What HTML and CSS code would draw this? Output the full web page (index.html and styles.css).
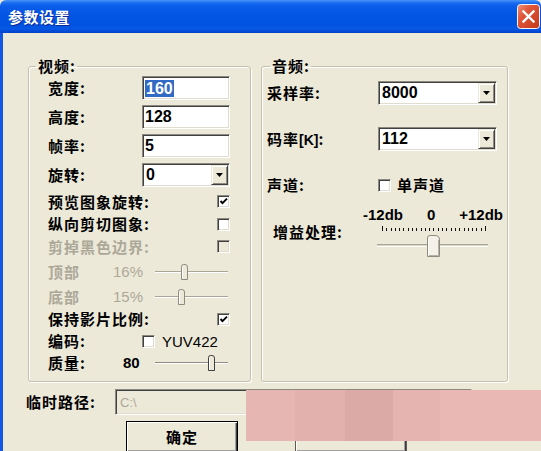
FILE: index.html
```html
<!DOCTYPE html>
<html lang="zh-CN">
<head>
<meta charset="utf-8">
<title>参数设置</title>
<link rel="stylesheet" href="styles.css">
</head>
<body>
<div class="window">
  <div class="titlebar">
    <span class="title">参数设置</span>
    <span class="close">
      <svg width="23" height="25" viewBox="0 0 23 25">
        <defs>
          <linearGradient id="cg" x1="0" y1="0" x2="1" y2="1">
            <stop offset="0" stop-color="#F2937B"/>
            <stop offset="0.35" stop-color="#E1563A"/>
            <stop offset="1" stop-color="#C23818"/>
          </linearGradient>
        </defs>
        <rect x="0.5" y="0.5" width="22" height="24" rx="3" fill="url(#cg)" stroke="#F4F4F4"/>
        <path d="M6.5 7.5l10 10M16.5 7.5l-10 10" stroke="#fff" stroke-width="2.4" stroke-linecap="square"/>
      </svg>
    </span>
  </div>
  <div class="client">
    <div class="groups">
      <fieldset class="group video">
        <legend>视频:</legend>
        <div class="row h28"><span class="lbl wv">宽度:</span><span class="edit"><span class="hl">160</span></span></div>
        <div class="row h29"><span class="lbl wv">高度:</span><span class="edit">128</span></div>
        <div class="row h29"><span class="lbl wv">帧率:</span><span class="edit">5</span></div>
        <div class="row h30"><span class="lbl wv">旋转:</span>
          <span class="combo v-combo"><span class="val">0</span><span class="arrow"><svg width="7" height="4" viewBox="0 0 7 4"><path d="M0 0h7L3.5 4z"/></svg></span></span>
        </div>
        <div class="row h23 spread"><span class="lbl">预览图象旋转:</span><span class="cb"><svg width="11" height="11" viewBox="0 0 11 11"><path d="M2.5 5l2 2.2L9 2.6" stroke="#000" stroke-width="1.9" fill="none"/></svg></span></div>
        <div class="row h22 spread"><span class="lbl">纵向剪切图象:</span><span class="cb"></span></div>
        <div class="row h23 spread"><span class="lbl off">剪掉黑色边界:</span><span class="cb cb-off"></span></div>
        <div class="row h28"><span class="lbl off w-s">顶部</span><span class="num off w-n">16%</span>
          <svg class="slider" width="75" height="18" viewBox="0 0 75 18">
            <path d="M0 8.5h73" stroke="#A9A699"/><path d="M0 9.5h73" stroke="#fff"/>
            <path d="M26.5 16.5V3.5Q26.5 1.5 28.5 1.5H30Q32.5 1.5 32.5 4V16.5Z" fill="#ECE9D8" stroke="#8E8C80"/>
            <path d="M27.5 15.5V4" stroke="#fff" fill="none"/>
          </svg>
        </div>
        <div class="row h22"><span class="lbl off w-s">底部</span><span class="num off w-n">15%</span>
          <svg class="slider" width="75" height="18" viewBox="0 0 75 18">
            <path d="M0 8.5h73" stroke="#A9A699"/><path d="M0 9.5h73" stroke="#fff"/>
            <path d="M23.5 16.5V3.5Q23.5 1.5 25.5 1.5H27Q29.5 1.5 29.5 4V16.5Z" fill="#ECE9D8" stroke="#8E8C80"/>
            <path d="M24.5 15.5V4" stroke="#fff" fill="none"/>
          </svg>
        </div>
        <div class="row h22 spread"><span class="lbl">保持影片比例:</span><span class="cb"><svg width="11" height="11" viewBox="0 0 11 11"><path d="M2.5 5l2 2.2L9 2.6" stroke="#000" stroke-width="1.9" fill="none"/></svg></span></div>
        <div class="row h22"><span class="lbl wv">编码:</span><span class="cb"></span><span class="latin">YUV422</span></div>
        <div class="row h22"><span class="lbl w-q">质量:</span><span class="num w-n2">80</span>
          <svg class="slider" width="75" height="18" viewBox="0 0 75 18">
            <path d="M0 8.5h73" stroke="#8E8C80"/><path d="M0 9.5h73" stroke="#fff"/>
            <path d="M53.5 16.5V3.5Q53.5 1.5 55.5 1.5H57Q59.5 1.5 59.5 4V16.5Z" fill="#ECE9D8" stroke="#404040"/>
            <path d="M54.5 15.5V4" stroke="#fff" fill="none"/>
          </svg>
        </div>
      </fieldset>
      <fieldset class="group audio">
        <legend>音频:</legend>
        <div class="row h38"><span class="lbl wa">采样率:</span>
          <span class="combo a-combo"><span class="val">8000</span><span class="arrow"><svg width="7" height="4" viewBox="0 0 7 4"><path d="M0 0h7L3.5 4z"/></svg></span></span>
        </div>
        <div class="row h54"><span class="lbl wa">码率<span class="k">[K]</span>:</span>
          <span class="combo a-combo"><span class="val">112</span><span class="arrow"><svg width="7" height="4" viewBox="0 0 7 4"><path d="M0 0h7L3.5 4z"/></svg></span></span>
        </div>
        <div class="row h38"><span class="lbl wa">声道:</span><span class="cb"></span><span class="lbl mono">单声道</span></div>
        <div class="row h56 top">
          <span class="lbl gain-lbl">增益处理:</span>
          <div class="gain">
            <div class="scale"><span>-12db</span><span>0</span><span>+12db</span></div>
            <svg width="140" height="36" viewBox="0 0 140 36">
              <path d="M19.5 3v5M23.5 5v3M28.5 5v3M32.5 5v3M36.5 5v3M40.5 5v3M45.5 5v3M49.5 5v3M53.5 5v3M58.5 5v3M62.5 5v3M66.5 5v3M70.5 5v3M75.5 5v3M79.5 5v3M83.5 5v3M88.5 5v3M92.5 5v3M96.5 5v3M101.5 5v3M105.5 5v3M109.5 5v3M113.5 5v3M118.5 5v3M122.5 3v5" stroke="#111" fill="none"/>
              <path d="M14 21.5h111" stroke="#A9A699"/>
              <path d="M14 22.5h111" stroke="#D9D6C8"/>
              <path d="M14 23.5h111" stroke="#fff"/>
              <path d="M64.5 33.5V15Q64.5 12.5 67 12.5H72Q76.5 12.5 76.5 17V33.5Z" fill="#F3F1E8" stroke="#8E8C80"/>
              <path d="M65.5 32.5V15" stroke="#fff" fill="none"/>
              <path d="M75.5 17V32.5H66" stroke="#B4B1A3" fill="none"/>
            </svg>
          </div>
        </div>
      </fieldset>
    </div>
    <div class="path-row">
      <span class="lbl wp">临时路径:</span>
      <span class="edit path">C:\</span>
    </div>
    <div class="buttons">
      <span class="btn btn-default">确定</span>
      <span class="btn"></span>
    </div>
    <div class="redact">
      <span class="m1"></span><span class="m2"></span><span class="m3"></span><span class="m4"></span><span class="m5"></span>
    </div>
  </div>
</div>
</body>
</html>
```
FILE: styles.css
```css
html, body {
  margin: 0;
  padding: 0;
  background: #ECE9D8;
}

.window {
  width: 541px;
  height: 451px;
  overflow: hidden;
  position: relative;
  font-family: "Noto Sans CJK SC", "Liberation Sans", sans-serif;
  color: #000;
}

.titlebar {
  height: 33px;
  box-sizing: border-box;
  display: flex;
  align-items: center;
  justify-content: space-between;
  padding: 0 1px 0 8px;
  border-radius: 6px 6px 0 0;
  background: linear-gradient(#4A95FA 0, #1A6BF0 3px, #0A5EEA 6px, #0355E3 14px, #0052E0 24px, #0857E5 29px, #0340C8 33px);
}

.title {
  color: #fff;
  font-weight: bold;
  font-size: 15px;
  line-height: 18px;
  letter-spacing: 0.5px;
  text-shadow: 1px 1px 0 #0A2A9A;
}

.close {
  display: flex;
  width: 23px;
  height: 25px;
}

.client {
  height: 418px;
  box-sizing: border-box;
  border-left: 3px solid #1258E4;
  padding-top: 25px;
  position: relative;
}

.groups {
  display: flex;
  gap: 10px;
  padding-left: 25px;
}

.group {
  margin: 0;
  box-sizing: border-box;
  height: 324px;
  min-width: 0;
  border: 1px solid #C3C0AE;
  border-radius: 3px;
  box-shadow: inset 1px 1px 0 #fff, 1px 1px 0 #fff;
}

.video {
  width: 223px;
  padding: 0 20px 0 19px;
}

.audio {
  width: 247px;
  padding: 0 10px 0 5px;
}

legend {
  font-size: 15px;
  font-weight: bold;
  line-height: 16px;
  letter-spacing: 1px;
  padding: 0 1px 0 2px;
}

.video legend { margin-left: -12px; }
.audio legend { margin-left: 3px; }

.row {
  display: flex;
  align-items: center;
}

.row.spread { justify-content: space-between; }
.row.top { align-items: flex-start; }

.h22 { height: 22px; }
.h23 { height: 23px; }
.h28 { height: 28px; }
.h29 { height: 29px; }
.h30 { height: 30px; }
.h38 { height: 38px; }
.h54 { height: 54px; }
.h56 { height: 56px; }

.lbl {
  font-size: 15px;
  font-weight: bold;
  line-height: 16px;
  letter-spacing: 1px;
  white-space: nowrap;
}

.lbl.off, .num.off { color: #ACA899; }

.wv { width: 94px; flex: none; }
.wa { width: 111px; flex: none; }
.w-s { width: 65px; flex: none; }
.w-q { width: 75px; flex: none; }
.wp { width: 89px; flex: none; }

.k {
  font-family: "Liberation Sans", sans-serif;
  letter-spacing: 0;
  font-size: 14px;
}

.num {
  font-family: "Liberation Sans", sans-serif;
  font-size: 15px;
  line-height: 16px;
}

.w-n { width: 42px; flex: none; }
.w-n2 { width: 32px; flex: none; font-weight: bold; }

.latin {
  font-family: "Liberation Sans", sans-serif;
  font-size: 15px;
  margin-left: 7px;
}

.mono { margin-left: 6px; }

.edit {
  box-sizing: border-box;
  width: 88px;
  height: 24px;
  flex: none;
  display: flex;
  align-items: center;
  padding-left: 2px;
  background: #fff;
  border: 1px solid;
  border-color: #8C8A80 #fff #fff #8C8A80;
  box-shadow: inset 1px 1px 0 #404040, inset -1px -1px 0 #E0DDD0;
  font-family: "Liberation Sans", sans-serif;
  font-size: 16px;
  font-weight: bold;
}

.hl {
  background: #316AC5;
  color: #fff;
  padding: 0 1px;
  line-height: 17px;
}

.combo {
  box-sizing: border-box;
  height: 24px;
  flex: none;
  display: flex;
  align-items: center;
  padding: 1px 1px 1px 2px;
  background: #fff;
  border: 1px solid;
  border-color: #8C8A80 #fff #fff #8C8A80;
  box-shadow: inset 1px 1px 0 #404040, inset -1px -1px 0 #E0DDD0;
  font-family: "Liberation Sans", sans-serif;
  font-size: 16px;
  font-weight: bold;
}

.v-combo { width: 88px; }
.a-combo { width: 119px; }

.combo .val { flex: 1; padding-left: 1px; }

.combo .arrow {
  box-sizing: border-box;
  width: 17px;
  height: 20px;
  display: flex;
  align-items: center;
  justify-content: center;
  background: #ECE9D8;
  border: 1px solid;
  border-color: #ECE9D8 #404040 #404040 #ECE9D8;
  box-shadow: inset 1px 1px 0 #fff, inset -1px -1px 0 #8C8A80;
}

.cb {
  box-sizing: border-box;
  width: 13px;
  height: 13px;
  flex: none;
  display: flex;
  align-items: center;
  justify-content: center;
  background: #fff;
  border: 1px solid;
  border-color: #8C8A80 #fff #fff #8C8A80;
  box-shadow: inset 1px 1px 0 #404040, inset -1px -1px 0 #E0DDD0;
}

.cb-off { background: #ECE9D8; }

.slider { flex: none; display: block; }

.gain-lbl {
  width: 90px;
  flex: none;
  margin-left: 6px;
  margin-top: 20px;
}

.gain {
  width: 140px;
  flex: none;
  display: flex;
  flex-direction: column;
}

.gain .scale {
  display: flex;
  justify-content: space-between;
  margin-top: 3px;
  height: 16px;
  font-family: "Liberation Sans", sans-serif;
  font-size: 15px;
  font-weight: bold;
  line-height: 16px;
}

.gain svg { display: block; }

.path-row {
  display: flex;
  align-items: center;
  padding-left: 23px;
  margin-top: 7px;
  height: 26px;
}

.edit.path {
  width: 357px;
  height: 26px;
  background: #ECE9D8;
  color: #ACA899;
  font-weight: normal;
  font-size: 13px;
  padding-left: 4px;
}

.buttons {
  display: flex;
  gap: 57px;
  padding-left: 123px;
  margin-top: 6px;
}

.btn {
  box-sizing: border-box;
  width: 112px;
  height: 32px;
  display: flex;
  align-items: center;
  justify-content: center;
  background: #ECE9D8;
  border: 1px solid #5A5A52;
  box-shadow: inset 1px 1px 0 #fff, inset -1px -1px 0 #404040, inset -2px -2px 0 #A0A0A0;
  font-size: 15px;
  font-weight: bold;
  letter-spacing: 1px;
  padding-bottom: 1px;
}

.btn-default { border-color: #000; }

.redact {
  position: absolute;
  left: 243px;
  top: 357px;
  width: 298px;
  height: 51px;
  display: flex;
}

.redact span { display: block; height: 100%; }
.m1 { width: 49px; background: #E6B6B2; }
.m2 { width: 50px; background: #E3B1AD; }
.m3 { width: 48px; background: #DCAAA6; }
.m4 { width: 47px; background: #E5B4B0; }
.m5 { flex: 1; background: #E9B8B4; }
```
